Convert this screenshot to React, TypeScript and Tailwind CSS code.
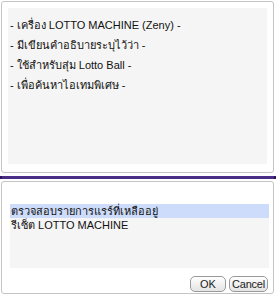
import React from "react";

const lines = [
  "- เครื่อง LOTTO MACHINE (Zeny) -",
  "- มีเขียนคำอธิบายระบุไว้ว่า -",
  "- ใช้สำหรับสุ่ม Lotto Ball -",
  "- เพื่อค้นหาไอเทมพิเศษ -",
];

const options = ["ตรวจสอบรายการแรร์ที่เหลืออยู่", "รีเซ็ต LOTTO MACHINE"];

const App: React.FC = () => {
  return (
    <div
      className="w-[276px] h-[296px] bg-white text-[#111] text-[11px] overflow-hidden"
      style={{ fontFamily: '"Liberation Sans", "Noto Sans", sans-serif' }}
    >
      <div className="pt-px pl-px w-[274px]">
        <div className="h-[172px] border border-[#c4c4c4] rounded-[3px] px-[6px] pt-[6px]">
          <div className="bg-[#f5f5f5] h-[156px] pt-[7px] pl-[2px]">
            {lines.map((l) => (
              <div key={l} className="h-[20px] leading-[20px] whitespace-nowrap">
                {l}
              </div>
            ))}
          </div>
        </div>
      </div>

      <div className="mt-[3px] h-[3px] bg-[#4a2d86] flex justify-between">
        <div className="w-[2px] h-[3px] bg-[#2e1560]" />
        <div className="w-[2px] h-[3px] bg-[#2e1560]" />
      </div>

      <div className="pt-[2px] pl-px w-[274px]">
        <div className="h-[113px] border border-[#c4c4c4] rounded-[3px] pl-[8px] pr-[4px] pt-[22px] flex flex-col">
          <div className="bg-[#f5f5f5] h-[64px]">
            {options.map((o, i) => (
              <div
                key={o}
                className={
                  "h-[14px] leading-[14px] pl-[1px] whitespace-nowrap " +
                  (i === 0 ? "bg-[#cddcfb]" : "")
                }
              >
                {o}
              </div>
            ))}
          </div>
          <div className="flex justify-end gap-[3px] mt-[8px] pr-[1px]">
            <button className="w-[36px] h-[16px] rounded-[5px] border border-[#9a9a9a] bg-gradient-to-b from-white to-[#e4e4e4] text-[11px] leading-[14px] text-[#222]">
              OK
            </button>
            <button className="w-[39px] h-[16px] rounded-[5px] border border-[#9a9a9a] bg-gradient-to-b from-white to-[#e4e4e4] text-[11px] leading-[14px] text-[#222] tracking-[-0.2px]">
              Cancel
            </button>
          </div>
        </div>
      </div>
    </div>
  );
};

export default App;
